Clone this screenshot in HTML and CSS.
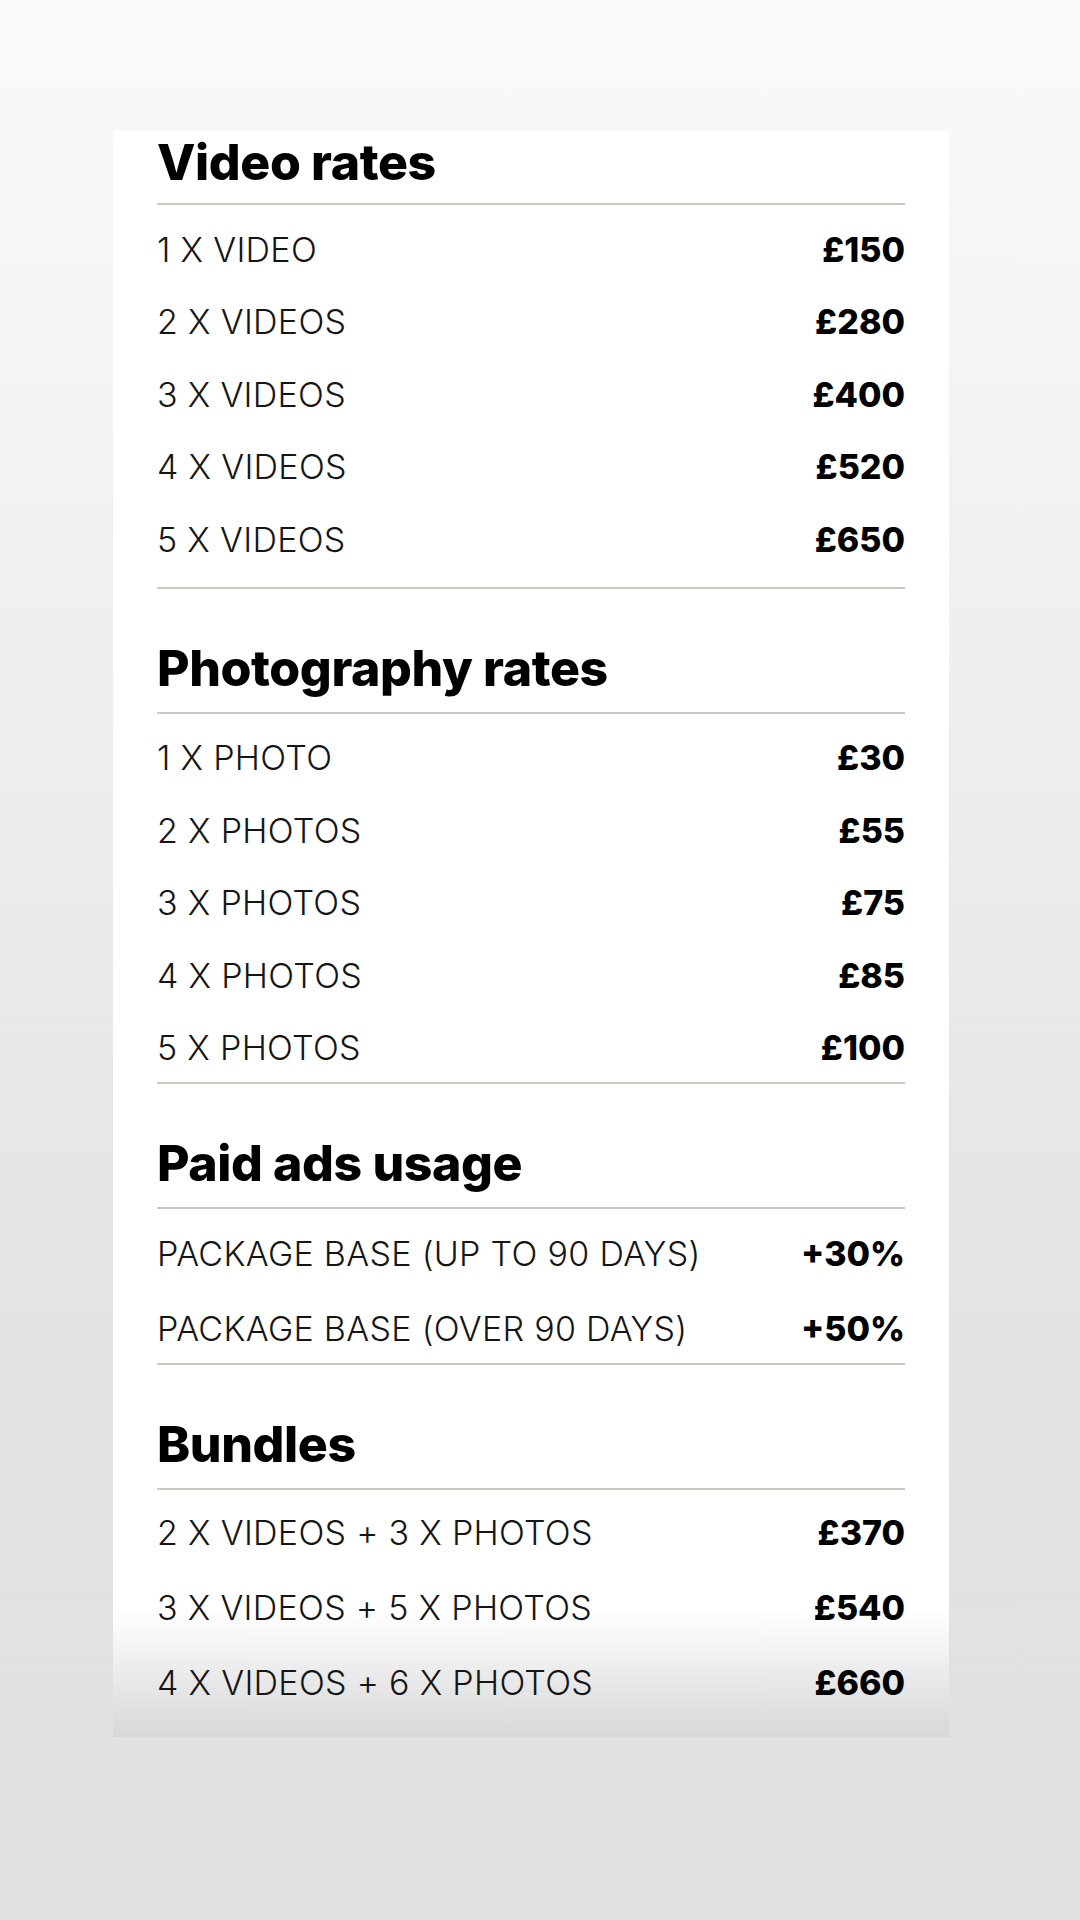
FILE: index.html
```html
<!DOCTYPE html>
<html>
<head>
    <title>Rates</title>
    <link rel="stylesheet" href="styles.css">
</head>
<body>
    <div class="card">
        <section class="group group-first">
            <h2>Video rates</h2>
            <ul class="rates">
                <li><span>1 X VIDEO</span><b>£150</b></li>
                <li><span>2 X VIDEOS</span><b>£280</b></li>
                <li><span>3 X VIDEOS</span><b>£400</b></li>
                <li><span>4 X VIDEOS</span><b>£520</b></li>
                <li><span>5 X VIDEOS</span><b>£650</b></li>
            </ul>
        </section>

        <section class="group">
            <h2>Photography rates</h2>
            <ul class="rates">
                <li><span>1 X PHOTO</span><b>£30</b></li>
                <li><span>2 X PHOTOS</span><b>£55</b></li>
                <li><span>3 X PHOTOS</span><b>£75</b></li>
                <li><span>4 X PHOTOS</span><b>£85</b></li>
                <li><span>5 X PHOTOS</span><b>£100</b></li>
            </ul>
        </section>

        <section class="group">
            <h2>Paid ads usage</h2>
            <ul class="rates rates-wide">
                <li><span>PACKAGE BASE (UP TO 90 DAYS)</span><b>+30%</b></li>
                <li><span>PACKAGE BASE (OVER 90 DAYS)</span><b>+50%</b></li>
            </ul>
        </section>

        <section class="group group-last">
            <h2>Bundles</h2>
            <ul class="rates rates-wide">
                <li><span>2 X VIDEOS + 3 X PHOTOS</span><b>£370</b></li>
                <li><span>3 X VIDEOS + 5 X PHOTOS</span><b>£540</b></li>
                <li><span>4 X VIDEOS + 6 X PHOTOS</span><b>£660</b></li>
            </ul>
        </section>
    </div>
</body>
</html>
```

FILE: styles.css
```css
:root {
    --ink: #151515;
    --rule: #c9c9c2;
    --page-top: #fafafa;
    --page-bottom: #e0e0e0;
}

* {
    box-sizing: border-box;
    margin: 0;
    padding: 0;
}

html, body {
    width: 1080px;
    min-height: 1920px;
}

body {
    font-family: 'Inter', 'Liberation Sans', Arial, sans-serif;
    color: var(--ink);
    background: linear-gradient(to bottom, var(--page-top) 0%, #e3e3e3 70%, var(--page-bottom) 100%);
    padding-top: 130px;
}

.card {
    width: 836px;
    margin-left: 113px;
    padding: 7px 44px 0;
    height: 1607px;
    background: linear-gradient(to bottom, #ffffff 0, #ffffff 1480px, #d7d7d7 100%);
}

/* section titles */
.group h2 {
    font-size: 50px;
    line-height: 50px;
    font-weight: 800;
    letter-spacing: -0.4px;
    color: #000;
    margin-top: 54px;
    padding-bottom: 19px;
    border-bottom: 2px solid var(--rule);
}

.group-first h2 {
    margin-top: 0;
    padding-bottom: 16px;
}

/* price rows */
.rates {
    list-style: none;
    padding-top: 6px;
    border-bottom: 2px solid var(--rule);
}

.group-first .rates {
    padding-bottom: 13px;
}

.rates-wide {
    padding-top: 4px;
}

.group-last .rates {
    padding-top: 2px;
    border-bottom: none;
}

.rates li {
    display: flex;
    justify-content: space-between;
    align-items: flex-end;
    height: 72.5px;
    font-size: 34px;
    line-height: 68px;
}

.rates-wide li {
    height: 75px;
}

.rates span {
    font-weight: 300;
    letter-spacing: 0.3px;
}

.rates b {
    font-weight: 800;
    color: #000;
}
```
